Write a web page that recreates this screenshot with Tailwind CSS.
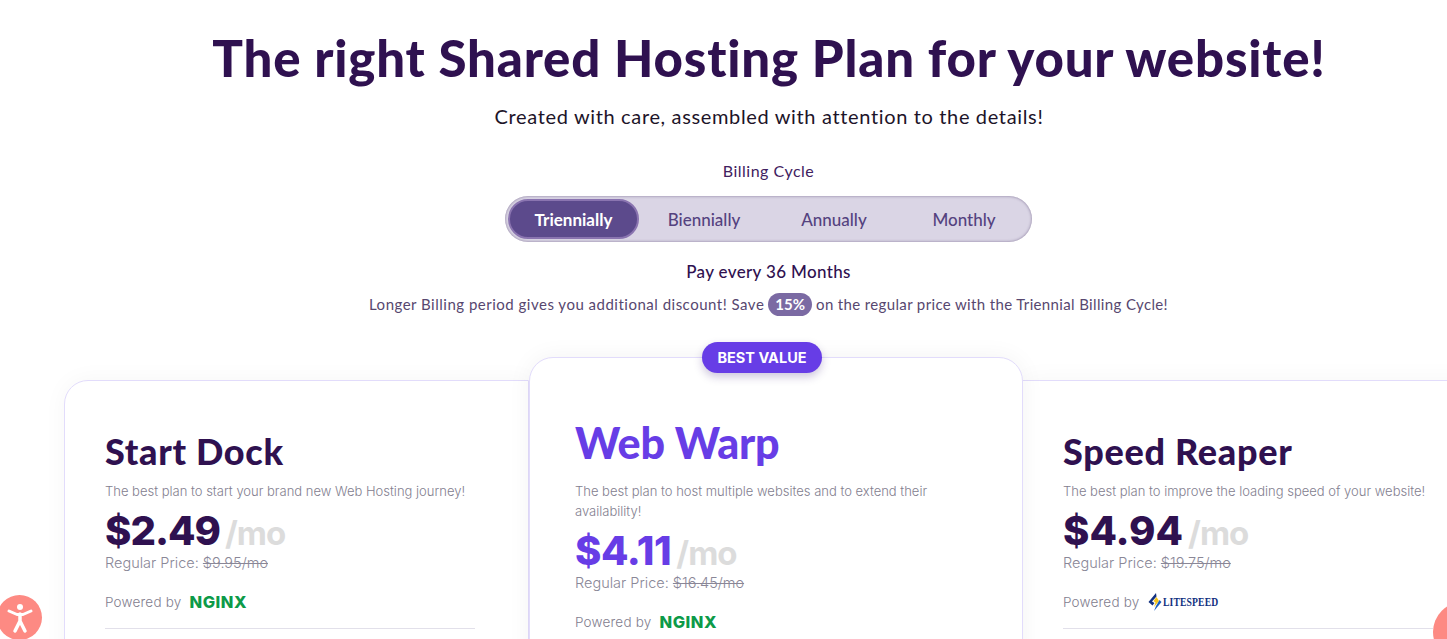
<!DOCTYPE html>
<html lang="en">
  <head>
    <meta charset="UTF-8" />
    <meta name="viewport" content="width=device-width, initial-scale=1.0" />
    <title>Shared Hosting Plans</title>
    <script src="https://cdn.jsdelivr.net/npm/@tailwindcss/browser@4"></script>
  </head>
  <body class="bg-white overflow-hidden font-['Lato',sans-serif]">
    <div class="relative h-[639px] w-[1447px] overflow-hidden">
      <!-- Header -->
      <div class="flex flex-col items-center pl-[91px] pt-[27px]">
        <h1 class="text-[51px] leading-[62px] font-black text-[#2f1150] tracking-[0.8px]">The right Shared Hosting Plan for your website!</h1>
        <p class="mt-[12px] text-[20px] leading-[30px] text-[#1d1429] tracking-[0.65px]">Created with care, assembled with attention to the details!</p>
      </div>

      <!-- Billing cycle -->
      <div class="flex flex-col items-center mt-[28px] pl-[90px]">
        <p class="text-[16px] leading-[24px] text-[#3f2160] tracking-[0.5px]">Billing Cycle</p>
        <div class="mt-[13px] flex w-[527px] h-[46px] items-center rounded-full bg-[#dad5e5] p-[3px] shadow-[inset_0_0_3px_rgba(60,40,90,0.55)]">
          <div class="flex h-[40px] w-[131px] items-center justify-center rounded-full bg-[#5c4a8c] border-2 border-[#8a74b0] pt-[1px] text-[17px] font-bold text-white">Triennially</div>
          <div class="flex w-[130px] justify-center pt-[1px] text-[17px] font-medium text-[#54427f]">Biennially</div>
          <div class="flex w-[130px] justify-center pt-[1px] text-[17px] font-medium text-[#54427f]">Annually</div>
          <div class="flex w-[130px] justify-center pt-[1px] text-[17px] font-medium text-[#54427f]">Monthly</div>
        </div>
        <p class="mt-[18px] text-[17px] leading-[24px] font-medium text-[#2f1150] tracking-[0.35px]">Pay every 36 Months</p>
        <p class="mt-[8px] flex items-center text-[15px] leading-[24px] text-[#57476f]">
          <span class="tracking-[0.5px]">Longer Billing period gives you additional discount! Save</span>
          <span class="mx-[4px] rounded-full bg-[#7b6aa3] px-[7px] text-[15px] leading-[23px] font-bold text-white">15%</span>
          <span class="tracking-[0.36px]">on the regular price with the Triennial Billing Cycle!</span>
        </p>
      </div>

      <!-- Plans -->
      <div class="absolute left-[64px] top-[357px] flex items-start">
        <div class="mt-[23px] h-[300px] w-[465px] shrink-0 rounded-l-[24px] border border-[#e2dcfb] pl-[40px] pt-[47px] shadow-[0_0_24px_rgba(0,0,0,0.04)]">
          <h2 class="text-[36px] leading-[46px] font-black text-[#2f1150] tracking-[0.7px]">Start Dock</h2>
          <p class="mt-[7px] text-[13px] leading-[20px] font-light text-[#83808f] font-['Inter',sans-serif]">The best plan to start your brand new Web Hosting journey!</p>
          <div class="mt-[8px] flex items-baseline gap-[5px] h-[44px] font-['Inter',sans-serif]">
            <span class="text-[40px] leading-[44px] font-extrabold text-[#2f1150] tracking-[-1px]">$2.49</span>
            <span class="text-[33px] leading-[44px] font-bold text-[#dcdcdc] tracking-[-1px]">/mo</span>
          </div>
          <p class="text-[14.500px] leading-[20px] font-light text-[#8a8797] font-['Inter',sans-serif]">Regular Price: <s>$9.95/mo</s></p>
          <div class="mt-[19px] flex h-[20px] items-center gap-[8px] text-[13.500px] tracking-[0.2px] font-light text-[#83808f] font-['Inter',sans-serif]">
            Powered by
            <span class="text-[16.500px] font-extrabold tracking-[0.5px] text-[#0d9a48]">NGINX</span>
          </div>
          <div class="mt-[16px] h-px w-[370px] bg-[#e2e0ea]"></div>
        </div>

        <div class="relative z-10 h-[320px] w-[494px] shrink-0 rounded-t-[24px] border border-[#e2dcfb] bg-white pl-[45px] pt-[59px] shadow-[0_0_24px_rgba(0,0,0,0.05)]">
          <span class="absolute left-[172px] top-[-16px] flex h-[31px] w-[120px] items-center justify-center rounded-full bg-[#673de6] text-[14.500px] font-bold text-white font-['Inter',sans-serif] shadow-[0_4px_8px_rgba(60,30,120,0.25)]">BEST VALUE</span>
          <h2 class="-mt-[2px] text-[43px] leading-[56px] font-black text-[#673de6] tracking-[-0.2px]">Web Warp</h2>
          <p class="mt-[10px] w-[390px] text-[13px] leading-[20px] font-light text-[#83808f] font-['Inter',sans-serif]">The best plan to host multiple websites and to extend their availability!</p>
          <div class="mt-[8px] flex items-baseline gap-[5px] h-[44px] font-['Inter',sans-serif]">
            <span class="text-[40px] leading-[44px] font-extrabold text-[#673de6] tracking-[-0.4px]">$4.11</span>
            <span class="text-[33px] leading-[44px] font-bold text-[#dcdcdc] tracking-[-1px]">/mo</span>
          </div>
          <p class="text-[14.500px] leading-[20px] font-light text-[#8a8797] font-['Inter',sans-serif]">Regular Price: <s>$16.45/mo</s></p>
          <div class="mt-[19px] flex h-[20px] items-center gap-[8px] text-[13.500px] tracking-[0.2px] font-light text-[#83808f] font-['Inter',sans-serif]">
            Powered by
            <span class="text-[16.500px] font-extrabold tracking-[0.5px] text-[#0d9a48]">NGINX</span>
          </div>
        </div>

        <div class="mt-[23px] h-[300px] w-[466px] shrink-0 border border-l-0 border-[#e2dcfb] pl-[40px] pt-[47px] shadow-[0_0_24px_rgba(0,0,0,0.04)]">
          <h2 class="text-[36px] leading-[46px] font-black text-[#2f1150] tracking-[0.7px]">Speed Reaper</h2>
          <p class="mt-[7px] text-[13px] leading-[20px] font-light text-[#83808f] font-['Inter',sans-serif]">The best plan to improve the loading speed of your website!</p>
          <div class="mt-[8px] flex items-baseline gap-[5px] h-[44px] font-['Inter',sans-serif]">
            <span class="text-[40px] leading-[44px] font-extrabold text-[#2f1150] tracking-[0px]">$4.94</span>
            <span class="text-[33px] leading-[44px] font-bold text-[#dcdcdc] tracking-[-1px]">/mo</span>
          </div>
          <p class="text-[14.500px] leading-[20px] font-light text-[#8a8797] font-['Inter',sans-serif]">Regular Price: <s>$19.75/mo</s></p>
          <div class="mt-[19px] flex h-[20px] items-center gap-[8px] text-[13.500px] tracking-[0.2px] font-light text-[#83808f] font-['Inter',sans-serif]">
            Powered by
            <span class="flex items-center gap-[1px]">
              <svg width="14" height="18" viewBox="0 0 14 18"><path d="M8 0 L0.500 9 L4.500 12.500 L6.500 10 L4 8.500 L8.500 3.500 Z" fill="#12307f"/><path d="M8.500 4 L11 8 L6 14 L7.500 9.500 L5.500 8 Z" fill="#f2c21b"/><path d="M6 18 L13.500 9 L11.500 7 L8 13 Z" fill="#1b5fc0"/></svg>
              <span class="origin-left scale-x-[0.74] text-[13px] font-bold text-[#12307f] font-['Liberation_Serif',serif]">LITESPEED</span>
            </span>
          </div>
          <div class="mt-[16px] h-px w-[370px] bg-[#e2e0ea]"></div>
        </div>
      </div>

      <!-- Accessibility button -->
      <div class="absolute left-[-3px] top-[595px] flex h-[45px] w-[45px] items-center justify-center rounded-full bg-[#fd8a83]">
        <svg width="28" height="32" viewBox="0 0 28 32" fill="none" stroke="white" stroke-linecap="round" stroke-linejoin="round">
          <circle cx="14" cy="5" r="3" fill="white" stroke="none"/>
          <path d="M3 9 L11 12.500 H17 L25 9" stroke-width="3"/>
          <path d="M14 12 V19 L9 29 M14 19 L19 29" stroke-width="3.500"/>
        </svg>
      </div>
      <!-- Chat button -->
      <div class="absolute left-[1433px] top-[602px] h-[60px] w-[60px] rounded-full bg-[#fd8a83]"></div>
    </div>
  </body>
</html>
